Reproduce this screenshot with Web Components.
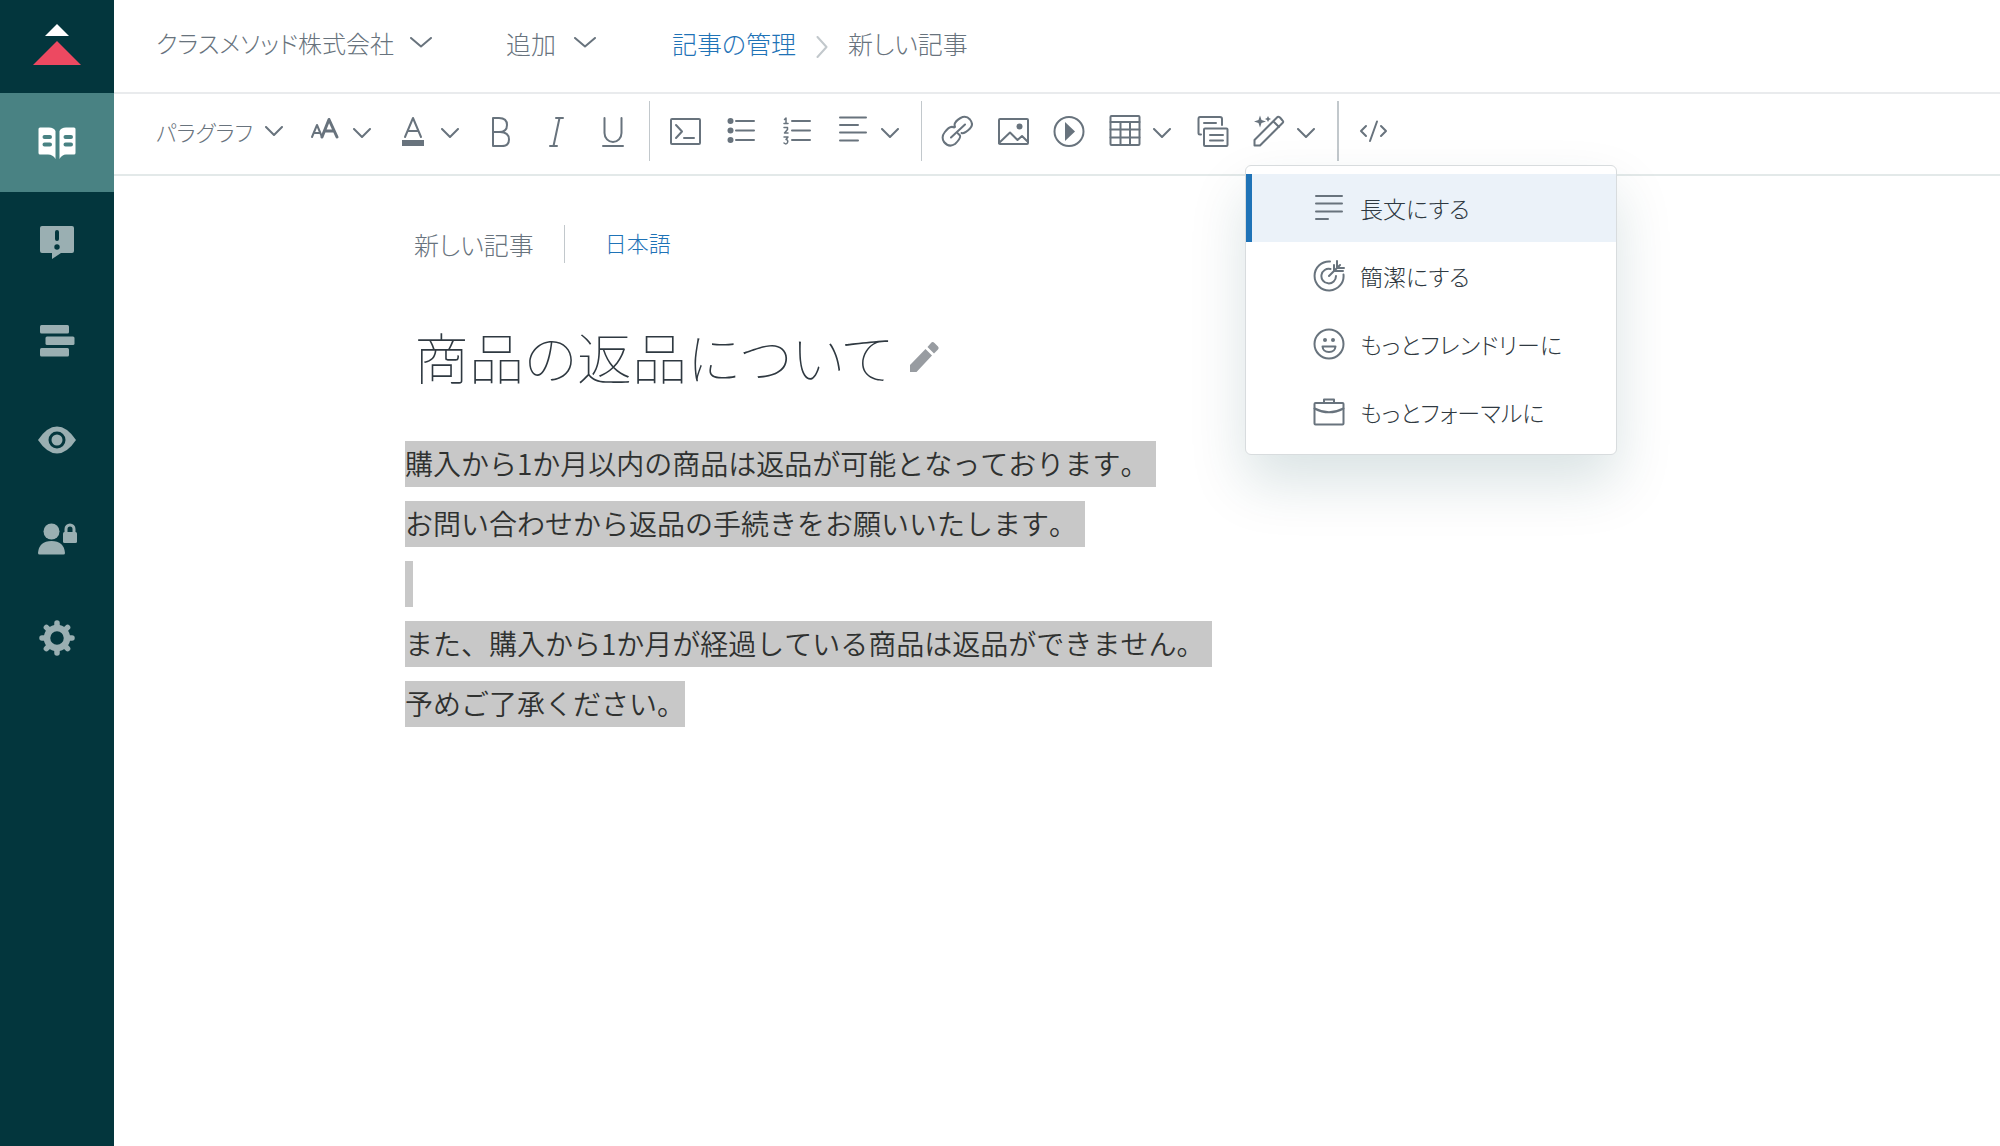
<!DOCTYPE html>
<html lang="ja">
<head>
<meta charset="utf-8">
<title>新しい記事</title>
<style>
  body { margin: 0; background: #fff; font-family: "Noto Sans CJK JP", sans-serif; font-weight: 300; color: #68737d; }
</style>
</head>
<body>
<kb-app></kb-app>
<script>
const base = `<style>
  *, *::before { box-sizing: border-box; }
  button { font: inherit; color: inherit; background: none; border: 0; padding: 0; margin: 0; cursor: pointer; font-feature-settings: inherit; }
  a { color: #1f73b7; text-decoration: none; }
</style>`;

class KbElement extends HTMLElement {
  connectedCallback() {
    if (this.shadowRoot) return;
    this.attachShadow({ mode: 'open' }).innerHTML = base + this.view();
  }
}
const define = (name, view) => customElements.define(name, class extends KbElement { view() { return view(this); } });

/* Each icon: [width, height, markup] */
const icons = {
  logo: [48, 42, '<path fill="#fff" d="M24 0 36 12H12z"/><path fill="#ed4961" d="M24 17 48 41H0z"/>'],
  book: [40, 34, '<path fill="currentColor" d="M1.500 3Q1.500 1.500 3 1.500H12Q17 1.500 18.500 5V33Q16 28.500 11 28.500H3Q1.500 28.500 1.500 27zM38.500 3Q38.500 1.500 37 1.500H29Q24 1.500 22.500 5V33Q25 28.500 29 28.500H37Q38.500 28.500 38.500 27z"/><path stroke="#498283" stroke-width="4" stroke-linecap="round" d="M7.500 11H13M7.500 18.500H13M28.500 11H34M28.500 18.500H34"/>'],
  alert: [36, 34, '<path fill="currentColor" d="M3 1H33Q35 1 35 3V26Q35 28 33 28H22L13 34V28H3Q1 28 1 26V3Q1 1 3 1z"/><path stroke="#03363d" stroke-width="4" stroke-linecap="round" d="M18 7V14"/><circle cx="18" cy="22" r="2.700" fill="#03363d"/>'],
  list: [36, 32, '<g fill="currentColor"><rect x="1" width="29" height="8.500" rx="1.500"/><rect x="6.500" y="11.500" width="29" height="8.500" rx="1.500"/><rect x="1" y="23" width="29" height="8.500" rx="1.500"/></g>'],
  eye: [40, 28, '<path fill="currentColor" d="M1 14Q10 .5 20 .5T39 14Q30 27.500 20 27.500T1 14z"/><circle cx="20" cy="14" r="7" fill="currentColor" stroke="#03363d" stroke-width="3"/>'],
  users: [40, 32, '<g fill="currentColor"><circle cx="14.500" cy="8.500" r="8"/><path d="M1 30Q2 18 14.500 18T28 30Q28 31.500 26.500 31.500H2.500Q1 31.500 1 30z"/><rect x="26" y="9" width="14" height="11" rx="1.500"/></g><path fill="none" stroke="currentColor" stroke-width="3" d="M29 10V6a4 4 0 0 1 8 0V10"/>'],
  gear: [36, 36, '<circle cx="18" cy="18" r="10" fill="none" stroke="currentColor" stroke-width="6.500"/><path stroke="currentColor" stroke-width="5.500" stroke-linecap="round" d="M18 3V6M18 30V33M3 18H6M30 18H33M7.400 7.400 9 9M27 27l1.600 1.600M28.600 7.400 27 9M9 27l-1.600 1.600"/>'],
  chevron: [22, 12, '<path d="M1 1 11 9.500 21 1"/>'],
  caret: [12, 22, '<path stroke="#c2c8cc" d="M1.500 1 10.500 11 1.500 21"/>'],
  chevronSmall: [18, 10, '<path d="M1 1 9 9 17 1"/>'],
  fontSize: [32, 32, '<path stroke-width="2" d="M3 22 8 10 13 22M5 18H11"/><path stroke-width="3" d="M13 22 20 4.500 28 22M16 16H25"/>'],
  fontColor: [32, 32, '<path d="M8 22 16 3 24 22M10.500 16H21.500"/><path stroke="none" fill="currentColor" d="M5 25H27V31H5z"/>'],
  bold: [32, 32, '<path d="M8 3H14Q22 3 22 10T14 17H8zM8 17H15Q24 17 24 24.500T15 31H8z"/>'],
  italic: [32, 32, '<path d="M15 3H22M9 31H16M18.500 3 12.500 31"/>'],
  underline: [32, 32, '<path d="M7.500 3V18a8.500 9 0 0 0 17 0V3M6 31H26"/>'],
  terminal: [32, 32, '<rect x="2" y="4" width="29" height="25" rx="1"/><path d="M7 10 13 16.500 7 23M15 23H25"/>'],
  bullets: [32, 32, '<path d="M11 6H29M11 15.500H29M11 25H29"/><g stroke="none" fill="currentColor"><circle cx="5.500" cy="6" r="3"/><circle cx="5.500" cy="15.500" r="3"/><circle cx="5.500" cy="25" r="3"/></g>'],
  numbers: [32, 32, '<path d="M11 6H29M11 15.500H29M11 25H29"/><path stroke-width="1.500" d="M3.500 4.500 5 3V8.500M3 8.500H7M3 12.500H6.500V14.500L3.500 18H7M3 22H7L5 24.500Q7.500 25 6.500 27.500T3 28"/>'],
  align: [32, 32, '<path d="M3 2.500H29M3 10H21M3 17.500H29M3 25.500H21"/>'],
  link: [32, 32, '<path d="m10 22.500 14-13M13 12.500Q9 10 3.500 17.500 0 22 3 27 8 33 14 29 20 23 19 20.500L17 18.500M14 12 13.500 10Q14 6 19.500 3 25 0 29 4.500 33 9.500 29 13.500 23.500 19 20.500 18"/>'],
  image: [32, 32, '<rect x="2" y="4" width="29" height="25" rx="1"/><path d="M2 28 13 17.500 20.500 25 25 21 31 27"/><circle cx="22.500" cy="11.500" r="3" stroke="none" fill="currentColor"/>'],
  play: [32, 32, '<circle cx="16" cy="16.500" r="14.500"/><path stroke="none" fill="currentColor" d="M12 7 22 16.500 12 26z"/>'],
  table: [32, 32, '<rect x="1.500" y="1" width="29" height="29" rx="1"/><path d="M1.500 7H30.500M1.500 14.500H30.500M1.500 22.500H30.500M11.500 7V30M21 7V30"/>'],
  copy: [32, 32, '<path d="M4 19.500H3Q1.500 19.500 1.500 18V4Q1.500 2 3 2H23Q25 2 25 4V10"/><rect x="7" y="13.500" width="23.500" height="17.500" rx="1"/><path d="M7 8H19M13 20H26M13 25.500H26"/>'],
  magic: [32, 32, '<path d="M1.500 30.500V25L24 2.500Q25 1 27 2.500L29.500 5.500Q31 6.500 29.500 8L7 30.500zM20.500 6.500 26 12"/><path stroke="none" fill="currentColor" d="M7 .5 8.500 5 13 6.500 8.500 8 7 12.500 5.500 8 1 6.500 5.500 5zM15 1 16 3 18 4 16 5 15 7 14 5 12 4 14 3z"/>'],
  code: [32, 32, '<path d="M9 11 4 16 9 21M24 11 29 16 24 21M20 6.500 13 26"/>'],
  lines: [32, 32, '<path d="M3 4H29M3 11.500H29M3 19.500H29M3 27H15"/>'],
  target: [32, 32, '<path d="M17 1.500A14.500 14.500 0 1 0 30.500 14.500M17.500 9A7.300 7.300 0 1 0 23 16M16 16 24 8M21 5V11H30M24 1V8H31M22 10 27 5"/>'],
  smile: [32, 32, '<circle cx="16" cy="16" r="14.500"/><path d="M9.500 18.500H22.500Q22 24 16 24T9.500 18.500z"/><g stroke="none" fill="currentColor"><circle cx="12" cy="12" r="2"/><circle cx="20" cy="12" r="2"/></g>'],
  briefcase: [32, 32, '<rect x="1.500" y="7" width="29" height="21.500" rx="1"/><path d="M11 7V3.500H21V7M1.500 12.500Q16 20 30.500 12.500"/>'],
  pencil: [32, 32, '<path stroke="none" fill="#989ca1" d="M1 31V24L16.500 8 23 14.500 7.500 31zM18.500 6 22 2Q23.500 0 25.500 2L29 5.500Q30.500 7 29 8.500L25 12.500z"/>'],
};
const filled = ['logo', 'book', 'alert', 'list', 'eye', 'users', 'gear'];

define('ui-icon', el => {
  const name = el.getAttribute('name');
  const [w, h, body] = icons[name];
  const paint = filled.includes(name) ? 'stroke="none"' : 'stroke="currentColor" stroke-width="2" stroke-linejoin="round" stroke-linecap="round"';
  return `<style>:host { display: block; flex: none; } svg { display: block; }</style>
  <svg width="${w}" height="${h}" viewBox="0 0 ${w} ${h}" fill="none" ${paint} aria-hidden="true">${body}</svg>`;
});

define('nav-item', el => `<style>
  :host { display: block; color: #9aafb2; }
  :host([active]) { background: #498283; color: #fff; }
  a { display: flex; align-items: center; justify-content: center; height: 99px; color: inherit; }
</style><a href="#" aria-label="${el.getAttribute('label')}"><ui-icon name="${el.getAttribute('icon')}"></ui-icon></a>`);

define('side-nav', () => `<style>
  :host { display: block; background: #03363d; }
  .logo { display: flex; height: 93px; padding-bottom: 4px; align-items: center; justify-content: center; }
</style>
<nav>
  <a class="logo" href="#" aria-label="Guide"><ui-icon name="logo"></ui-icon></a>
  <nav-item active icon="book" label="Articles"></nav-item>
  <nav-item icon="alert" label="Feedback"></nav-item>
  <nav-item icon="list" label="Arrange"></nav-item>
  <nav-item icon="eye" label="Preview"></nav-item>
  <nav-item icon="users" label="Permissions"></nav-item>
  <nav-item icon="gear" label="Settings"></nav-item>
</nav>`);

define('top-bar', () => `<style>
  :host { display: flex; align-items: center; height: 94px; padding: 0 42px 6px; border-bottom: 2px solid #e9ebed; font-size: 25px; line-height: 36px; font-feature-settings: "palt"; white-space: nowrap; }
  button { display: flex; align-items: center; justify-content: space-between; }
  .brand { width: 276px; margin-right: 74px; font-size: 24px; }
  .add { width: 90px; margin-right: 76px; }
  .crumbs { display: flex; align-items: center; gap: 20px; }
  .crumbs ui-icon { padding-top: 8px; }
</style>
<button class="brand">クラスメソッド株式会社<ui-icon name="chevron"></ui-icon></button>
<button class="add">追加<ui-icon name="chevron"></ui-icon></button>
<nav class="crumbs"><a href="#">記事の管理</a><ui-icon name="caret"></ui-icon><span>新しい記事</span></nav>`);

define('tool-button', el => {
  const drop = el.hasAttribute('dropdown');
  return `<style>
  :host { display: block; width: ${drop ? 88 : 56}px; }
  button { display: flex; gap: 12px; align-items: center; width: 100%; height: 60px; padding: 0 12px; }
  .arrow { padding-top: 4px; }
</style><button aria-label="${el.getAttribute('label')}"><ui-icon name="${el.getAttribute('icon')}"></ui-icon>${drop ? '<ui-icon class="arrow" name="chevronSmall"></ui-icon>' : ''}</button>`;
});

define('menu-option', el => `<style>
  :host { display: block; }
  button { display: flex; align-items: center; gap: 15px; width: 100%; height: 68px; padding-left: 61px; border-left: 6px solid transparent; color: #68737d; text-align: left; }
  span { color: #2f3941; }
  :host([selected]) button { background: #ebf2f9; border-color: #1f73b7; }
</style><button role="menuitem"><ui-icon name="${el.getAttribute('icon')}"></ui-icon><span><slot></slot></span></button>`);

define('option-menu', () => `<style>
  :host { display: block; box-sizing: border-box; width: 372px; padding: 8px 0; background: #fff; border: 1px solid #d8dcde; border-radius: 6px; box-shadow: 0 28px 56px rgba(4, 68, 77, .15); font-size: 23px; line-height: 36px; font-feature-settings: "palt"; white-space: nowrap; }
</style><div role="menu"><slot></slot></div>`);

define('edit-toolbar', () => `<style>
  :host { display: flex; align-items: center; height: 82px; padding: 0 42px 7px; border-bottom: 2px solid #e3e9e9; }
  .style { display: flex; align-items: center; justify-content: space-between; width: 127px; margin-right: 14px; font-size: 22px; line-height: 36px; font-feature-settings: "palt"; white-space: nowrap; }
  hr { width: 1px; height: 60px; margin: 0 7px 0 8px; border: 0; background: #c2c8cc; }
  hr.strong { width: 2px; margin-right: 6px; }
  .anchor { position: relative; }
  option-menu { position: absolute; z-index: 2; top: 64px; left: 4px; }
</style>
<button class="style">パラグラフ<ui-icon name="chevronSmall"></ui-icon></button>
<tool-button dropdown icon="fontSize" label="Font size"></tool-button>
<tool-button dropdown icon="fontColor" label="Text color"></tool-button>
<tool-button icon="bold" label="Bold"></tool-button>
<tool-button icon="italic" label="Italic"></tool-button>
<tool-button icon="underline" label="Underline"></tool-button>
<hr>
<tool-button icon="terminal" label="Code block"></tool-button>
<tool-button icon="bullets" label="Bulleted list"></tool-button>
<tool-button icon="numbers" label="Numbered list"></tool-button>
<tool-button dropdown icon="align" label="Alignment"></tool-button>
<hr>
<tool-button icon="link" label="Link"></tool-button>
<tool-button icon="image" label="Image"></tool-button>
<tool-button icon="play" label="Video"></tool-button>
<tool-button dropdown icon="table" label="Table"></tool-button>
<tool-button icon="copy" label="Content block"></tool-button>
<div class="anchor">
  <tool-button dropdown icon="magic" label="Enhance writing"></tool-button>
  <option-menu>
    <menu-option selected icon="lines">長文にする</menu-option>
    <menu-option icon="target">簡潔にする</menu-option>
    <menu-option icon="smile">もっとフレンドリーに</menu-option>
    <menu-option icon="briefcase">もっとフォーマルに</menu-option>
  </option-menu>
</div>
<hr class="strong">
<tool-button icon="code" label="Source code"></tool-button>`);

define('article-editor', () => `<style>
  :host { display: block; padding: 49px 42px 42px 291px; }
  .meta { display: flex; align-items: center; height: 38px; padding-left: 9px; font-size: 25px; line-height: 36px; font-feature-settings: "palt"; }
  .meta a { margin-left: 30px; padding: 0 0 4px 40px; border-left: 1px solid #c2c8cc; font-size: 22px; line-height: 34px; }
  .title { display: flex; align-items: center; gap: 16px; height: 80px; margin: 52px 0 46px; padding-left: 9px; }
  .title button { padding-top: 4px; }
  h1 { margin: 0; font-size: 55px; line-height: 80px; font-weight: 100; color: #2f3941; font-feature-settings: "palt"; white-space: nowrap; }
  p { margin: 0 0 14px; height: 46px; font-size: 28px; font-weight: 350; line-height: 44px; color: #2f3130; font-kerning: none; }
  .body { outline: 0; }
  .body span { display: inline-block; height: 46px; padding-right: 8px; background: #c8c8c8; vertical-align: top; }
  .body p:last-child span { padding-right: 0; }
</style>
<div class="meta"><span>新しい記事</span><a href="#">日本語</a></div>
<div class="title"><h1>商品の返品について</h1><button aria-label="Edit title"><ui-icon name="pencil"></ui-icon></button></div>
<div class="body" contenteditable="true" spellcheck="false">
  <p><span>購入から1か月以内の商品は返品が可能となっております。</span></p>
  <p><span>お問い合わせから返品の手続きをお願いいたします。</span></p>
  <p><span></span></p>
  <p><span>また、購入から1か月が経過している商品は返品ができません。</span></p>
  <p><span>予めご了承ください。</span></p>
</div>`);

define('kb-app', () => `<style>
  :host { display: grid; grid-template-columns: 114px 1fr; min-height: 100vh; }
  main { min-width: 0; }
</style>
<side-nav></side-nav>
<main><top-bar></top-bar><edit-toolbar></edit-toolbar><article-editor></article-editor></main>`);
</script>
</body>
</html>
